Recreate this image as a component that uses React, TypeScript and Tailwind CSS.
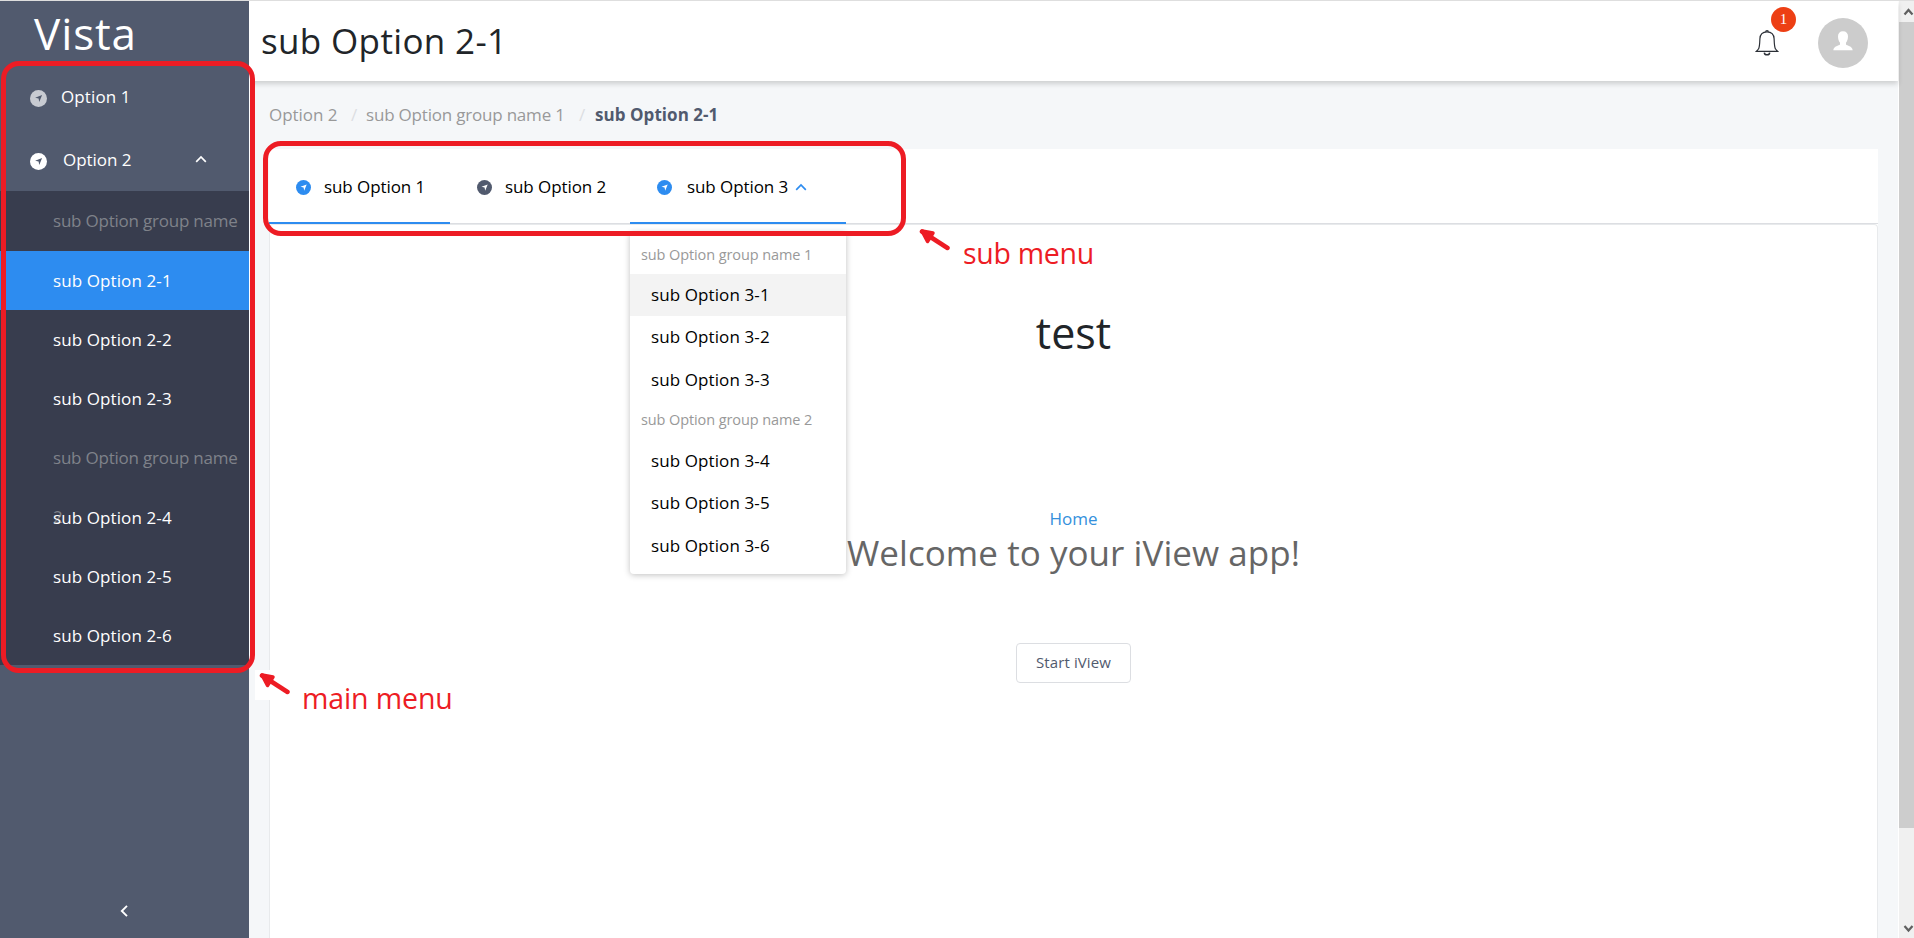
import type { ReactNode } from 'react';

function Compass({ className, arrow }: { className: string; arrow: string }) {
  return (
    <svg viewBox="0 0 16 16" className={`shrink-0 ${className}`}>
      <circle cx="8" cy="8" r="8" fill="currentColor" />
      <path d="M11.4 4.7 8.7 11.4 8.1 8.1 4.8 7.2Z" fill={arrow} />
    </svg>
  );
}

function ChevronUp({ className }: { className: string }) {
  return (
    <svg viewBox="0 0 12 8" fill="none" stroke="currentColor" strokeWidth="1.7" className={`h-2 w-3 ${className}`}>
      <path d="M1.2 6.8 6 2l4.8 4.8" />
    </svg>
  );
}

type Entry = { label: string; group?: boolean; overflow?: string; active?: boolean };

const sideEntries: Entry[] = [
  { label: 'sub Option group name', group: true },
  { label: 'sub Option 2-1', active: true },
  { label: 'sub Option 2-2' },
  { label: 'sub Option 2-3' },
  { label: 'sub Option group name', group: true, overflow: '2' },
  { label: 'sub Option 2-4' },
  { label: 'sub Option 2-5' },
  { label: 'sub Option 2-6' },
];

function SideEntry({ entry }: { entry: Entry }) {
  if (entry.group) {
    return (
      <div className="relative flex h-[60px] items-center pl-[53px] tracking-[-0.22px] whitespace-nowrap text-[#7f828a]">
        {entry.label}
        {entry.overflow && <span className="absolute top-[77px] left-[53px]">{entry.overflow}</span>}
      </div>
    );
  }
  return (
    <div className={`flex h-[59px] items-center pl-[53px] tracking-[0.1px] text-white ${entry.active ? 'bg-[#2d8cf0]' : ''}`}>
      <span className="relative">{entry.label}</span>
    </div>
  );
}

function Sidebar() {
  return (
    <aside className="relative z-10 flex w-[249px] shrink-0 flex-col bg-[#515a6e] text-white">
      <div className="flex h-16 items-center pb-px pl-[34px] text-[44px] leading-[60px] tracking-[0.9px]">Vista</div>
      <div className="flex h-[63px] items-center pl-[30px] tracking-[0.1px]">
        <Compass className="mt-[3px] mr-[14px] size-[17px] text-[#c8cbd2]" arrow="#515a6e" />
        Option 1
      </div>
      <div className="flex h-[63px] items-center pl-[30px] tracking-[-0.05px]">
        <Compass className="mt-[3px] mr-[16px] size-[17px] text-white" arrow="#515a6e" />
        Option 2
        <ChevronUp className="mr-[42px] mb-[2px] ml-auto" />
      </div>
      <div className="bg-[#383d4e]">
        {sideEntries.map((e, i) => (
          <SideEntry key={i} entry={e} />
        ))}
      </div>
      <div className="mt-auto flex h-[54px] items-center justify-center">
        <svg viewBox="0 0 8 12" className="mr-px h-3 w-2" fill="none" stroke="white" strokeWidth="1.9">
          <path d="M7 .8 1.8 6 7 11.2" />
        </svg>
      </div>
    </aside>
  );
}

function Header() {
  return (
    <header className="relative flex h-20 shrink-0 items-center bg-white pr-[30px] pl-3 shadow-[0_3px_5px_rgba(0,0,0,0.16)]">
      <h1 className="pb-px text-[35px] tracking-[0.35px] text-[#212529]">sub Option 2-1</h1>
      <div className="relative mt-[3px] mr-[39px] ml-auto">
        <svg viewBox="0 0 24 26" className="h-[26px] w-6" fill="none" stroke="#2b2f36" strokeWidth="1.2">
          <path d="M12 1.8c-4.4 0-6.9 2.8-7.100 7-.2 5.400-.3 8.500-1.300 10-.7 1.200-1.700 2-2.200 2.500h21.200c-.5-.5-1.500-1.300-2.200-2.500-1-1.500-1.100-4.600-1.300-10-.2-4.200-2.700-7-7.100-7Z" />
          <path d="M10.600 1.700c0-1.400 2.800-1.400 2.800 0" />
          <path d="M9.300 22.600c.3 3 5.100 3 5.400 0" strokeWidth="1.500" />
        </svg>
        <span className="absolute top-[-23px] left-4 flex size-[25px] items-center justify-center rounded-full bg-[#ed3f14] pb-px font-['Liberation_Serif',serif] text-[15px] text-white">
          1
        </span>
      </div>
      <div className="mt-[3px] flex size-[50px] items-center justify-center rounded-full bg-[#cccccc]">
        <svg viewBox="0 0 20 20" className="mb-[3px] size-5" fill="white">
          <path d="M10 .3c3.200 0 5 2 5 5 0 2.700-.8 5-2 6.400v1.800c1 1.300 6.200 1.300 6.700 5.800H.3c.5-4.500 5.700-4.500 6.700-5.800v-1.800c-1.200-1.400-2-3.700-2-6.400 0-3 1.800-5 5-5Z" />
        </svg>
      </div>
    </header>
  );
}

function Tab({ label, width, open, color }: { label: string; width: string; open?: boolean; color: string }) {
  const active = color === 'text-[#2d8cf0]';
  return (
    <div className={`flex h-[75px] items-center border-b-2 pt-[2px] pl-[27px] text-black ${width} ${active ? 'border-[#2d8cf0]' : 'border-transparent'}`}>
      <Compass className={`mt-[2px] size-[15px] ${color} ${open ? 'mr-[15px]' : 'mr-[13px]'}`} arrow="#fff" />
      <span className="tracking-[-0.08px]">{label}</span>
      {open && <ChevronUp className="ml-[7px] text-[#2d8cf0]" />}
    </div>
  );
}

function MenuGroup({ children }: { children: ReactNode }) {
  return <div className="flex h-[39px] items-center pl-[11px] text-[14.5px] tracking-[-0.1px] text-[#999999]">{children}</div>;
}

function MenuItem({ children, active }: { children: ReactNode; active?: boolean }) {
  return <div className={`flex h-[42.3px] items-center pl-[21px] tracking-[0.1px] text-black ${active ? 'bg-[#f3f3f3]' : ''}`}>{children}</div>;
}

function Dropdown() {
  return (
    <div className="absolute top-[83px] left-[361px] z-10 h-[342px] w-[216px] rounded bg-white pt-[3px] shadow-[0_1px_6px_rgba(0,0,0,0.25)]">
      <MenuGroup>sub Option group name 1</MenuGroup>
      <MenuItem active>sub Option 3-1</MenuItem>
      <MenuItem>sub Option 3-2</MenuItem>
      <MenuItem>sub Option 3-3</MenuItem>
      <MenuGroup>sub Option group name 2</MenuGroup>
      <MenuItem>sub Option 3-4</MenuItem>
      <MenuItem>sub Option 3-5</MenuItem>
      <MenuItem>sub Option 3-6</MenuItem>
    </div>
  );
}

function Arrow({ className }: { className: string }) {
  return (
    <svg viewBox="0 0 32 24" className={`absolute h-6 w-8 ${className}`} fill="#ed1c24" stroke="#ed1c24" strokeLinecap="round" strokeLinejoin="round">
      <path d="M3 3.5 28.5 20" strokeWidth="4.5" />
      <path d="M3 3 14 5 8.5 13.5Z" strokeWidth="3.5" />
    </svg>
  );
}

function Annotations() {
  return (
    <div className="pointer-events-none absolute inset-0 z-20 text-[#ed1c24]">
      <div className="absolute top-[74px] left-[249px] h-[588px] w-px bg-white" />
      <div className="absolute top-[669px] left-[255px] h-[30px] w-[15px] bg-white" />
      <div className="absolute top-[60px] left-px h-[612px] w-[254px] rounded-[18px] border-[5px] border-[#ed1c24]" />
      <div className="absolute top-[140px] left-[263px] h-[95px] w-[643px] rounded-[18px] border-[5px] border-[#ed1c24]" />
      <Arrow className="top-[671px] left-[259px]" />
      <Arrow className="top-[227px] left-[919px]" />
      <span className="absolute top-[677px] left-[302px] text-[28.5px] leading-10 tracking-[-0.1px]">main menu</span>
      <span className="absolute top-[232px] left-[963px] text-[28.5px] leading-10 tracking-[-0.3px]">sub menu</span>
    </div>
  );
}

function Scrollbar() {
  return (
    <div className="flex w-4 shrink-0 flex-col overflow-hidden border-l border-white bg-[#f0f0f0]">
      <svg viewBox="0 0 16 21" className="h-[21px] w-4 shrink-0" fill="none" stroke="#606060" strokeWidth="2.2">
        <path d="M5.5 13.5 9.5 9l4 4.5" />
      </svg>
      <div className="h-[806px] shrink-0 bg-[#cdcdcd]" />
      <svg viewBox="0 0 16 17" className="mt-auto h-[17px] w-4 shrink-0" fill="none" stroke="#606060" strokeWidth="2.2">
        <path d="M5.5 5 9.5 9.5 13.5 5" />
      </svg>
    </div>
  );
}

export default function App() {
  return (
    <div className="relative flex h-[938px] w-[1914px] overflow-hidden border-t border-[#dedede] bg-[#f5f7f9] font-['Open_Sans',sans-serif] text-[17px] leading-6">
      <Sidebar />
      <div className="flex min-w-0 flex-1 flex-col">
        <Header />
        <nav className="flex h-[68px] shrink-0 items-center pl-5 text-[#999999]">
          <span className="w-[82px] tracking-[-0.05px]">Option 2</span>
          <span className="w-[15px] text-[#dcdee2]">/</span>
          <span className="w-[213px] tracking-[-0.2px] whitespace-nowrap">sub Option group name 1</span>
          <span className="w-4 text-[#dcdee2]">/</span>
          <span className="font-bold tracking-[0.05px] text-[#515a6e]">sub Option 2-1</span>
        </nav>
        <main className="relative mr-5 ml-5 flex flex-1 flex-col bg-white">
          <div className="flex h-[75px] w-full shrink-0 shadow-[inset_0_-1px_0_#dcdee2]">
            <Tab label="sub Option 1" width="w-[181px]" color="text-[#2d8cf0]" />
            <Tab label="sub Option 2" width="w-[180px]" color="text-[#515a6e]" />
            <Tab label="sub Option 3" width="w-[216px]" color="text-[#2d8cf0]" open />
          </div>
          <Dropdown />
          <section className="flex flex-1 flex-col items-center rounded-t border border-b-0 border-[#e8eaec]">
            <h2 className="mt-[83px] text-[43px] leading-[50px] text-[#212529]">test</h2>
            <a className="mt-[149px] tracking-[-0.05px] text-[#3490dc]">Home</a>
            <p className="text-[35px] leading-[44px] tracking-[0.05px] text-[#666666]">Welcome to your iView app!</p>
            <button className="mt-[68px] h-10 w-[115px] rounded border border-[#dcdee2] pb-[3px] text-[15px] tracking-[0.1px] text-[#515a6e]">
              Start iView
            </button>
          </section>
        </main>
      </div>
      <Scrollbar />
      <Annotations />
    </div>
  );
}
